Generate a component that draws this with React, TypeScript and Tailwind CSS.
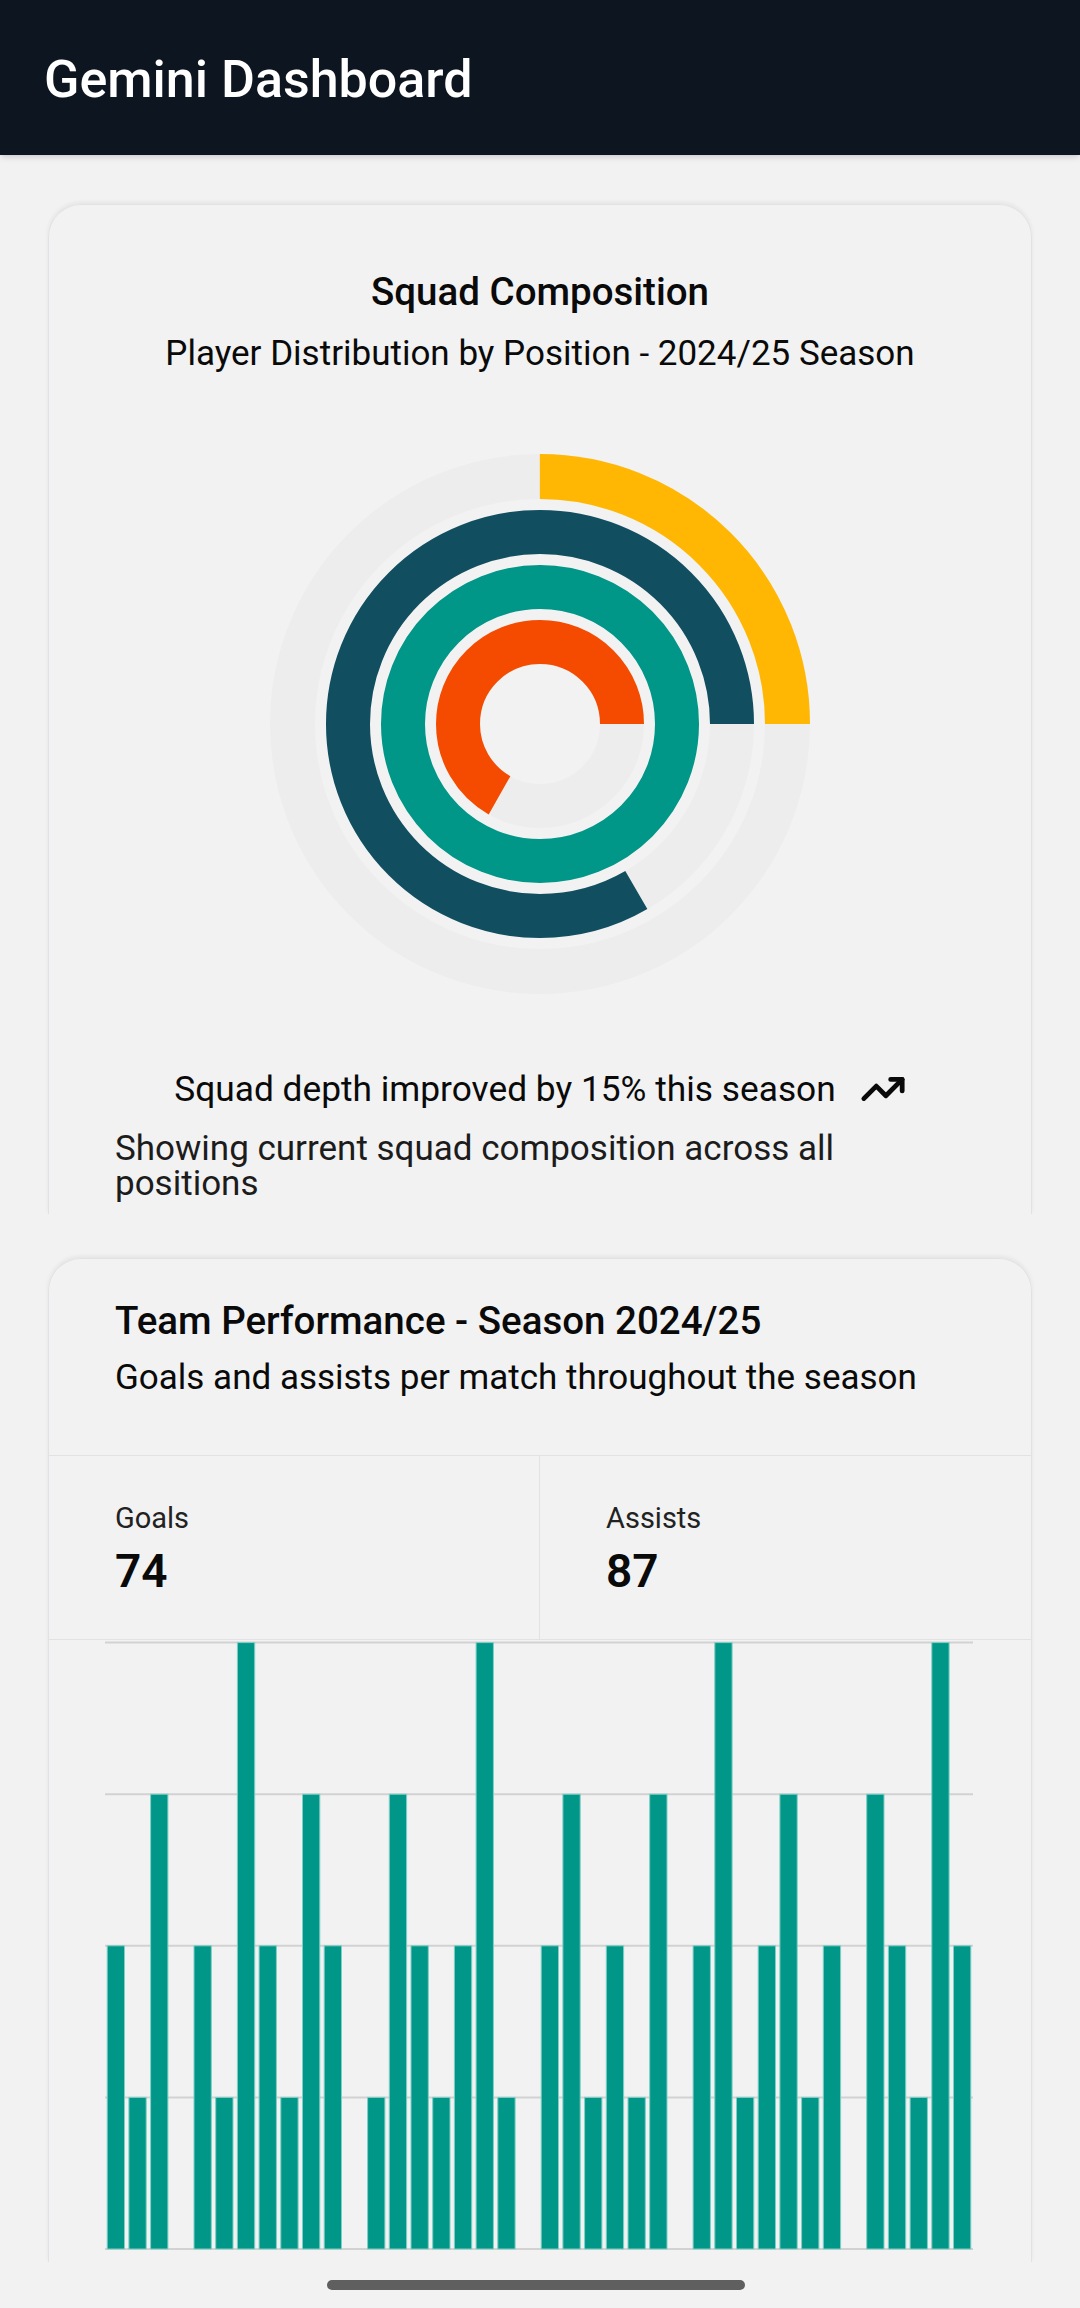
import { TrendingUp } from "lucide-react";

const rings = [
  { r: 247.5, w: 45, color: "#ffb703", sweep: 90 },
  { r: 192, w: 44, color: "#114e60", sweep: 300 },
  { r: 137, w: 44, color: "#009688", sweep: 360 },
  { r: 82, w: 44, color: "#f44b00", sweep: 240 },
];

const matches = [
  2, 1, 3, 0, 2, 1, 4, 2, 1, 3, 2, 0, 1, 3, 2, 1, 2, 4, 1, 0,
  2, 3, 1, 2, 1, 3, 0, 2, 4, 1, 2, 3, 1, 2, 0, 3, 2, 1, 4, 2,
];

function SquadChart() {
  return (
    <svg width="540" height="540" viewBox="0 0 540 540" className="block mx-auto">
      <g transform="translate(0,540) scale(1,-1)">
        {rings.map((ring) => {
          const circ = 2 * Math.PI * ring.r;
          const len = (ring.sweep / 360) * circ;
          return (
            <g key={ring.color}>
              <circle cx="270" cy="270" r={ring.r} fill="none" stroke="#ededed" strokeWidth={ring.w} />
              <circle
                cx="270"
                cy="270"
                r={ring.r}
                fill="none"
                stroke={ring.color}
                strokeWidth={ring.w}
                strokeDasharray={ring.sweep >= 360 ? undefined : `${len} ${circ}`}
              />
            </g>
          );
        })}
      </g>
    </svg>
  );
}

function MatchChart() {
  const left = 56;
  const right = 924;
  const bottom = 609;
  const step = 151.6;
  const slot = (right - left) / matches.length;
  return (
    <svg width="982" height="622" viewBox="0 0 982 622" className="block">
      {[0, 1, 2, 3, 4].map((i) => (
        <line key={i} x1={left} x2={right} y1={bottom - i * step} y2={bottom - i * step} stroke="#d2d2d2" strokeWidth="2" />
      ))}
      {matches.map((v, i) =>
        v > 0 ? (
          <rect
            key={i}
            x={left + i * slot + 2.2}
            y={bottom - v * step}
            width={slot - 4.4}
            height={v * step}
            fill="#009688"
            stroke="#7fcfc6"
            strokeWidth="1"
          />
        ) : null
      )}
    </svg>
  );
}

export default function App() {
  return (
    <div className="relative min-h-[2308px] h-[2308px] overflow-hidden bg-[#f2f2f2] font-['Roboto',sans-serif] text-[#0a0a0a]">
      <header className="h-[155px] bg-[#0d1520] px-[44px] pt-[5px] flex items-center shadow-md">
        <h1 className="text-[52px] font-medium text-white">Gemini Dashboard</h1>
      </header>

      <main className="px-[48px] pt-[49px]">
        <section className="h-[1010px] overflow-hidden rounded-t-[33px] border border-b-0 border-[#e2e2e6] shadow-[0_-2px_4px_rgba(0,0,0,0.06)]">
          <div className="px-[66px] pt-[57px]">
            <h2 className="text-center text-[38.5px] leading-[60px] font-medium">Squad Composition</h2>
            <p className="mt-[10px] text-center text-[35px] leading-[44px]">
              Player Distribution by Position - 2024/25 Season
            </p>
            <div className="mt-[78px]">
              <SquadChart />
            </div>
            <div className="mt-[72px] flex items-center justify-center gap-[24px] text-[35.3px] leading-[44px]">
              <span>Squad depth improved by 15% this season</span>
              <TrendingUp size={46} strokeWidth={2.5} />
            </div>
            <p className="mt-[19px] text-[35px] leading-[35px] text-[#1c1c1c]">
              Showing current squad composition across all positions
            </p>
          </div>
        </section>

        <section className="mt-[44px] h-[1004px] overflow-hidden rounded-t-[33px] border border-b-0 border-[#e2e2e6] shadow-[0_-2px_4px_rgba(0,0,0,0.06)]">
          <div className="px-[66px] pt-[34px] pb-[55px]">
            <h2 className="text-[38.5px] leading-[56px] font-medium">Team Performance - Season 2024/25</h2>
            <p className="mt-[7px] text-[35px] leading-[44px]">Goals and assists per match throughout the season</p>
          </div>
          <div className="grid grid-cols-2 border-y border-[#e2e2e6]">
            <div className="border-r border-[#e2e2e6] px-[66px] pt-[42px] pb-[38px]">
              <div className="text-[29px] leading-[40px] text-[#222]">Goals</div>
              <div className="mt-[3px] text-[46px] leading-[60px] font-semibold">74</div>
            </div>
            <div className="px-[66px] pt-[42px] pb-[38px]">
              <div className="text-[29px] leading-[40px] text-[#222]">Assists</div>
              <div className="mt-[3px] text-[46px] leading-[60px] font-semibold">87</div>
            </div>
          </div>
          <MatchChart />
        </section>
      </main>

      <div className="absolute left-[327px] top-[2280px] h-[10px] w-[418px] rounded-full bg-[#5f5f5f]" />
    </div>
  );
}
